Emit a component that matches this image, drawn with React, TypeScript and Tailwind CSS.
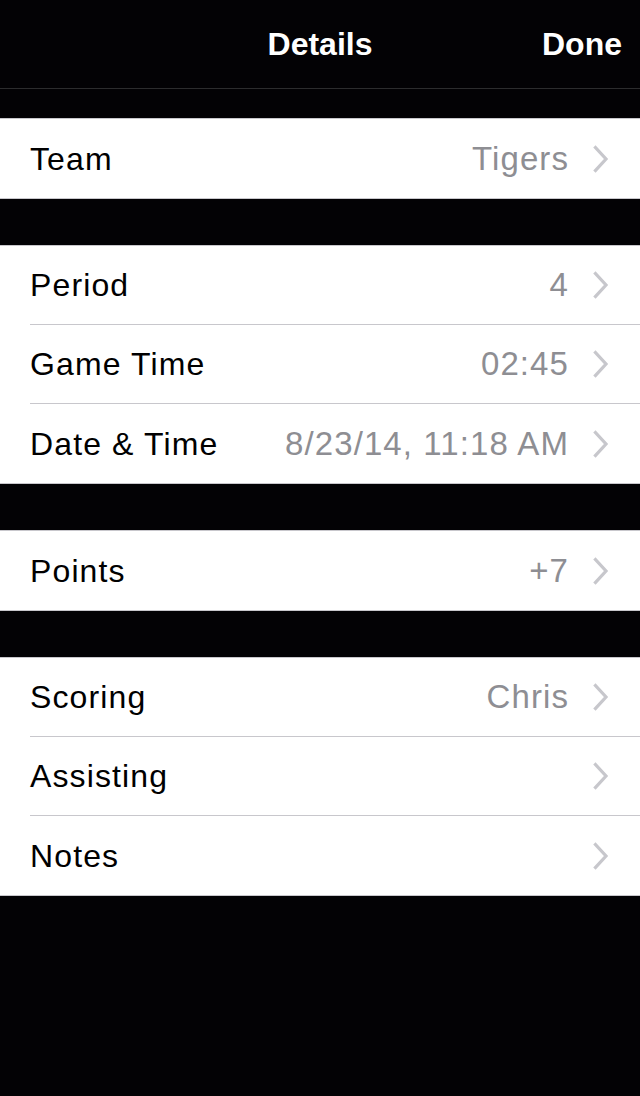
const Chevron = () => (
  <svg width="16" height="28" viewBox="0 0 16 28" className="shrink-0">
    <path d="M2.5 2.5 L13 14 L2.5 25.5" fill="none" stroke="#c7c7cc" strokeWidth="3.2" strokeLinecap="square" />
  </svg>
);

type Row = { label: string; value?: string };

const groups: Row[][] = [
  [{ label: "Team", value: "Tigers" }],
  [
    { label: "Period", value: "4" },
    { label: "Game Time", value: "02:45" },
    { label: "Date & Time", value: "8/23/14, 11:18 AM" },
  ],
  [{ label: "Points", value: "+7" }],
  [{ label: "Scoring", value: "Chris" }, { label: "Assisting" }, { label: "Notes" }],
];

export default function App() {
  return (
    <div className="w-[640px] h-[1096px] bg-[#030205] overflow-hidden" style={{ fontFamily: '"Liberation Sans", Arial, sans-serif' }}>
      <header className="relative h-[89px] border-b border-[#2c2c2e] flex items-center justify-center">
        <h1 className="text-white text-[32px] font-bold">Details</h1>
        <button className="absolute right-[18px] top-[25px] text-white text-[32px] font-bold leading-[38px]">Done</button>
      </header>

      <div className="flex flex-col gap-[46px] pt-[29px]">
        {groups.map((rows, gi) => (
          <section key={gi} className="bg-white border-y border-[#c8c7cc]">
            {rows.map((row, ri) => (
              <div key={row.label} className="pl-[30px]">
                <div
                  className={
                    "h-[79px] flex items-center pr-[31px] " +
                    (ri < rows.length - 1 ? "border-b border-[#c8c7cc]" : "")
                  }
                >
                  <span className="flex-1 text-black text-[32px] tracking-[0.035em]">{row.label}</span>
                  {row.value && (
                    <span className="text-[#8e8e93] text-[33px] tracking-[0.033em] mr-[24px]">{row.value}</span>
                  )}
                  <Chevron />
                </div>
              </div>
            ))}
          </section>
        ))}
      </div>
    </div>
  );
}
